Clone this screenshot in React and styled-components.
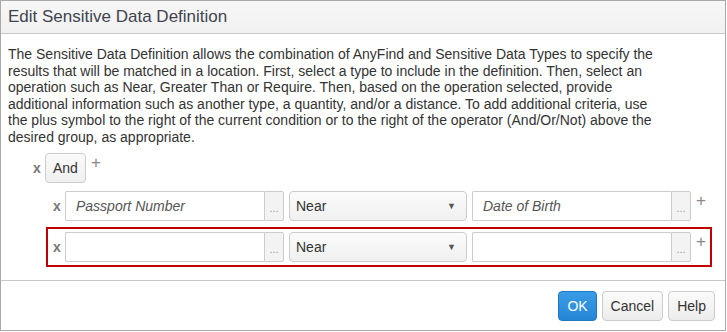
import React from 'react'
import styled, { createGlobalStyle } from 'styled-components'

const GlobalStyle = createGlobalStyle`
  html, body {
    margin: 0;
    padding: 0;
    background: #fff;
  }
  body {
    font-family: "Liberation Sans", Arial, sans-serif;
    font-size: 13px;
    color: #333;
  }
`

const introLines = [
  'The Sensitive Data Definition allows the combination of AnyFind and Sensitive Data Types to specify the',
  'results that will be matched in a location. First, select a type to include in the definition. Then, select an',
  'operation such as Near, Greater Than or Require. Then, based on the operation selected, provide',
  'additional information such as another type, a quantity, and/or a distance. To add additional criteria, use',
  'the plus symbol to the right of the current condition or to the right of the operator (And/Or/Not) above the',
  'desired group, as appropriate.',
]

const conditions = [
  { id: 1, type: 'Passport Number', op: 'Near', target: 'Date of Birth', selected: false },
  { id: 2, type: '', op: 'Near', target: '', selected: true },
]

const LookupField = ({ value }) => (
  <InputGroup>
    <TextBox>{value}</TextBox>
    <Addon>...</Addon>
  </InputGroup>
)

export default function App() {
  return (
    <>
      <GlobalStyle />
      <Dialog>
        <Header>
          <Title>Edit Sensitive Data Definition</Title>
        </Header>
        <Body>
          <Intro>
            {introLines.map((line, i) => (
              <IntroLine key={i}>{line}</IntroLine>
            ))}
          </Intro>
          <Group>
            <OperatorRow>
              <Remove>x</Remove>
              <OperatorButton>And</OperatorButton>
              <Plus>+</Plus>
            </OperatorRow>
            <Conditions>
              {conditions.map((c) => (
                <ConditionRow key={c.id} $selected={c.selected}>
                  <Remove>x</Remove>
                  <LookupField value={c.type} />
                  <Select>
                    <span>{c.op}</span>
                    <Caret>▼</Caret>
                  </Select>
                  <LookupField value={c.target} />
                  <Plus>+</Plus>
                </ConditionRow>
              ))}
            </Conditions>
          </Group>
        </Body>
        <Footer>
          <Button $primary>OK</Button>
          <Button>Cancel</Button>
          <Button>Help</Button>
        </Footer>
      </Dialog>
    </>
  )
}

const Dialog = styled.div`
  width: 726px;
  height: 331px;
  box-sizing: border-box;
  border: 1px solid #a9a9a9;
  display: flex;
  flex-direction: column;
  background: #fff;
`

const Header = styled.div`
  height: 33px;
  box-sizing: border-box;
  border-bottom: 1px solid #c8c8c8;
  background: linear-gradient(#f7f7f7, #f1f1f1);
  display: flex;
  align-items: center;
  padding: 0 7px;
`

const Title = styled.span`
  font-size: 17px;
  color: #3f4450;
`

const Body = styled.div`
  flex: 1;
  padding: 12px 7px 0;
`

const Intro = styled.div`
  font-size: 14px;
  line-height: 16.6px;
  color: #333;
`

const IntroLine = styled.div`
  white-space: nowrap;
`

const Group = styled.div`
  margin-top: 7px;
  margin-left: 25px;
  display: flex;
  flex-direction: column;
`

const OperatorRow = styled.div`
  display: flex;
  align-items: center;
`

const Remove = styled.span`
  width: 12px;
  font-size: 14px;
  color: #777;
  font-weight: bold;
`

const Plus = styled.span`
  align-self: flex-start;
  margin-left: 5px;
  margin-top: 2px;
  font-size: 17px;
  color: #888;
  line-height: 16px;
`

const OperatorButton = styled.div`
  height: 30px;
  box-sizing: border-box;
  padding: 0 7px;
  display: flex;
  align-items: center;
  font-size: 14px;
  color: #333;
  border: 1px solid #ccc;
  border-radius: 4px;
  background: linear-gradient(#fafafa, #f0f0f0);
`

const Conditions = styled.div`
  margin-top: 3px;
  margin-left: 13px;
  display: flex;
  flex-direction: column;
  gap: 1px;
`

const ConditionRow = styled.div`
  width: 666px;
  box-sizing: border-box;
  display: flex;
  align-items: center;
  gap: 5px;
  padding: 3px 4px 3px 5px;
  border: 2px solid ${(p) => (p.$selected ? '#c00000' : 'transparent')};
  & > ${Remove} {
    width: 7px;
  }
  & > ${Plus} {
    margin-left: 0;
  }
`

const InputGroup = styled.div`
  width: 219px;
  height: 30px;
  display: flex;
  box-sizing: border-box;
`

const TextBox = styled.div`
  flex: 1;
  box-sizing: border-box;
  border: 1px solid #ccc;
  border-right: none;
  border-radius: 2px 0 0 2px;
  padding: 0 10px;
  display: flex;
  align-items: center;
  font-size: 14px;
  font-style: italic;
  color: #555;
`

const Addon = styled.div`
  width: 20px;
  box-sizing: border-box;
  border: 1px solid #ccc;
  border-radius: 0 2px 2px 0;
  background: #f3f3f3;
  color: #999;
  font-size: 11px;
  display: flex;
  align-items: flex-end;
  justify-content: center;
  padding-bottom: 6px;
`

const Select = styled.div`
  width: 178px;
  height: 30px;
  box-sizing: border-box;
  border: 1px solid #ccc;
  border-radius: 4px;
  background: linear-gradient(#fbfbfb, #f0f0f0);
  display: flex;
  align-items: center;
  justify-content: space-between;
  padding: 0 10px 0 6px;
  font-size: 14px;
  color: #333;
`

const Caret = styled.span`
  font-size: 9px;
  color: #555;
`

const Footer = styled.div`
  height: 50px;
  box-sizing: border-box;
  border-top: 1px solid #c8c8c8;
  display: flex;
  justify-content: flex-end;
  align-items: flex-start;
  gap: 5px;
  padding: 10px 10px 0;
`

const Button = styled.button`
  height: 30px;
  padding: 0 8px;
  font-family: "Liberation Sans", Arial, sans-serif;
  font-size: 14px;
  border-radius: 4px;
  border: 1px solid ${(p) => (p.$primary ? '#1f77c6' : '#ccc')};
  color: ${(p) => (p.$primary ? '#fff' : '#333')};
  background: ${(p) =>
    p.$primary ? 'linear-gradient(#3a9ce6, #2586d6)' : 'linear-gradient(#fbfbfb, #ececec)'};
`
